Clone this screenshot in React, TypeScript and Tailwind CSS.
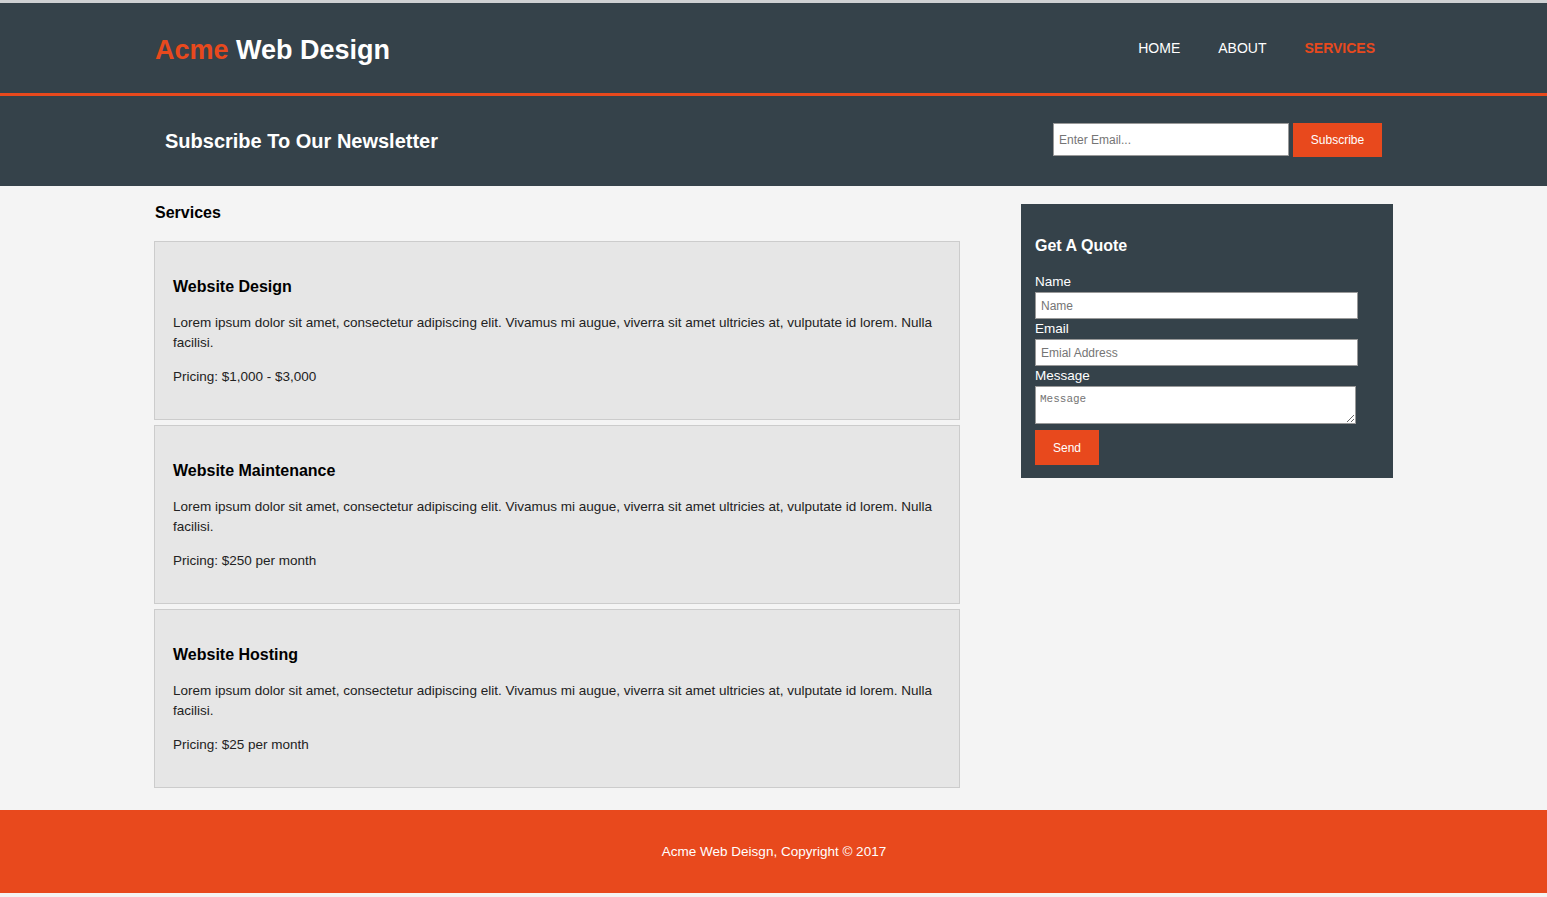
const services = [
  { title: "Website Design", price: "Pricing: $1,000 - $3,000" },
  { title: "Website Maintenance", price: "Pricing: $250 per month" },
  { title: "Website Hosting", price: "Pricing: $25 per month" },
];

const lorem =
  "Lorem ipsum dolor sit amet, consectetur adipiscing elit. Vivamus mi augue, viverra sit amet ultricies at, vulputate id lorem. Nulla facilisi.";

const App = () => (
  <div className="min-h-[897px] bg-[#f4f4f4] font-['Liberation_Sans',Arial,sans-serif] text-[13.5px] leading-[20px] text-[#222]">
    <div className="h-[3px] bg-[#cfd1d3]" />
    <header className="h-[93px] border-b-[3px] border-[#e8491d] bg-[#35424a] text-white">
      <div className="mx-auto flex h-[90px] w-[1239px] items-center justify-between">
        <h1 className="ml-[1px] mt-[3px] text-[27px] font-bold leading-[32px]">
          <span className="text-[#e8491d]">Acme</span> Web Design
        </h1>
        <nav className="mr-[-1px] flex">
          <a className="px-[19px] text-[14px] uppercase">Home</a>
          <a className="px-[19px] text-[14px] uppercase">About</a>
          <a className="px-[19px] text-[14px] font-bold uppercase text-[#e8491d]">Services</a>
        </nav>
      </div>
    </header>

    <section className="h-[90px] bg-[#35424a] text-white">
      <div className="mx-auto flex h-full w-[1239px] items-center justify-between">
        <h2 className="ml-[11px] text-[20px] font-bold">Subscribe To Our Newsletter</h2>
        <form className="mr-[11px] mt-[-3px] flex items-center gap-[4px]">
          <input
            type="email"
            placeholder="Enter Email..."
            className="h-[33px] w-[236px] border border-[#999] bg-white px-[5px] text-[12px] text-black placeholder:text-[#757575]"
          />
          <button type="button" className="h-[34px] w-[89px] bg-[#e8491d] text-[12px] text-white">
            Subscribe
          </button>
        </form>
      </div>
    </section>

    <div className="mx-auto flex w-[1239px] justify-between">
      <main className="w-[806px]">
        <h1 className="ml-[1px] mt-[17px] text-[16px] font-bold leading-[20px] text-black">Services</h1>
        <ul className="mt-[18px]">
          {services.map((s, i) => (
            <li
              key={s.title}
              className={`${i > 0 ? "mt-[5px]" : ""} border border-[#cccccc] bg-[#e6e6e6] px-[18px] pt-[18px] pb-[18px]`}
            >
              <h3 className="mt-[17px] text-[16px] font-bold leading-[20px] text-black">{s.title}</h3>
              <p className="mt-[16px] mb-[14px]">{lorem}</p>
              <p className="mb-[14px]">{s.price}</p>
            </li>
          ))}
        </ul>
      </main>

      <aside className="mt-[18px] h-[274px] w-[372px] bg-[#35424a] p-[14px] text-white">
        <h3 className="mt-[18px] text-[16px] font-bold leading-[20px]">Get A Quote</h3>
        <form className="mt-[15px]">
          <label className="block leading-[21px]">Name</label>
          <input
            placeholder="Name"
            className="block h-[27px] w-[323px] border border-[#999] bg-white px-[5px] text-[12px] text-black placeholder:text-[#757575]"
          />
          <label className="block">Email</label>
          <input
            placeholder="Emial Address"
            className="block h-[27px] w-[323px] border border-[#999] bg-white px-[5px] text-[12px] text-black placeholder:text-[#757575]"
          />
          <label className="block">Message</label>
          <textarea
            placeholder="Message"
            className="block h-[38px] w-[321px] resize border border-[#999] bg-white px-[4px] pt-[5px] font-['Liberation_Mono',monospace] text-[11px] leading-[14px] text-black placeholder:text-[#757575]"
          />
          <button type="button" className="mt-[6px] h-[35px] w-[64px] bg-[#e8491d] text-[12px] text-white">
            Send
          </button>
        </form>
      </aside>
    </div>

    <footer className="mt-[22px] flex h-[83px] items-center justify-center bg-[#e8491d] text-[13.5px] text-white">
      <p className="ml-[1px]">Acme Web Deisgn, Copyright © 2017</p>
    </footer>
  </div>
);

export default App;
